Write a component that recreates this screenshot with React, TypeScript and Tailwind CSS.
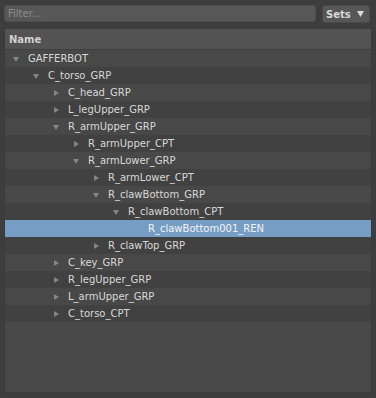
import React from "react";

type Node = { name: string; depth: number; open?: boolean; leaf?: boolean; selected?: boolean };

const rows: Node[] = [
  { name: "GAFFERBOT", depth: 0, open: true },
  { name: "C_torso_GRP", depth: 1, open: true },
  { name: "C_head_GRP", depth: 2 },
  { name: "L_legUpper_GRP", depth: 2 },
  { name: "R_armUpper_GRP", depth: 2, open: true },
  { name: "R_armUpper_CPT", depth: 3 },
  { name: "R_armLower_GRP", depth: 3, open: true },
  { name: "R_armLower_CPT", depth: 4 },
  { name: "R_clawBottom_GRP", depth: 4, open: true },
  { name: "R_clawBottom_CPT", depth: 5, open: true },
  { name: "R_clawBottom001_REN", depth: 6, leaf: true, selected: true },
  { name: "R_clawTop_GRP", depth: 4 },
  { name: "C_key_GRP", depth: 2 },
  { name: "R_legUpper_GRP", depth: 2 },
  { name: "L_armUpper_GRP", depth: 2 },
  { name: "C_torso_CPT", depth: 2 },
];

function Arrow({ open }: { open?: boolean }) {
  return open ? (
    <svg width="8" height="8" viewBox="0 0 8 8">
      <path d="M1 2 L7 2 L4 7 Z" fill="#858585" />
    </svg>
  ) : (
    <svg width="8" height="8" viewBox="0 0 8 8">
      <path d="M2 1 L7 4 L2 7 Z" fill="#858585" />
    </svg>
  );
}

export default function App() {
  return (
    <div
      className="w-[376px] h-[398px] bg-[#3d3d3d] flex flex-col px-[4px] pt-[5px] pb-[5px] text-[10px] text-[#d8d8d8]"
      style={{ fontFamily: '"DejaVu Sans", sans-serif' }}
    >
      <div className="flex items-start gap-[6px] h-[18px]">
        <div className="w-[312px] h-[17px] rounded-[3px] bg-[#575757] border border-[#4e4e4e] flex items-center px-[3px] text-[#8e8e8e]">
          Filter...
        </div>
        <div className="w-[48px] h-[18px] rounded-[3px] bg-[#575757] border border-[#4a4a4a] flex items-center pl-[3px] gap-[6px] font-bold text-[#d8d8d8]">
          Sets
          <svg width="7" height="6" viewBox="0 0 7 6">
            <path d="M0 0 L7 0 L3.5 6 Z" fill="#dcdcdc" />
          </svg>
        </div>
      </div>

      <div className="mt-[6px] w-[368px] flex-1 bg-[#484848] border-l border-r border-b border-[#3a3a3a] flex flex-col">
        <div className="h-[21px] bg-[#535353] border-b border-[#3f3f3f] flex items-center pl-[4px] font-bold text-[#d0d0d0]">
          Name
        </div>
        {rows.map((r, i) => (
          <div
            key={r.name}
            className={
              "h-[17px] flex items-center " +
              (r.selected ? "bg-[#769dc4] text-[#f4f4f4]" : i % 2 === 0 ? "bg-[#484848]" : "bg-[#414141]")
            }
            style={{ paddingLeft: 7 + r.depth * 20 }}
          >
            <span className="w-[16px] flex items-center">{!r.leaf && <Arrow open={r.open} />}</span>
            <span>{r.name}</span>
          </div>
        ))}
      </div>
    </div>
  );
}
